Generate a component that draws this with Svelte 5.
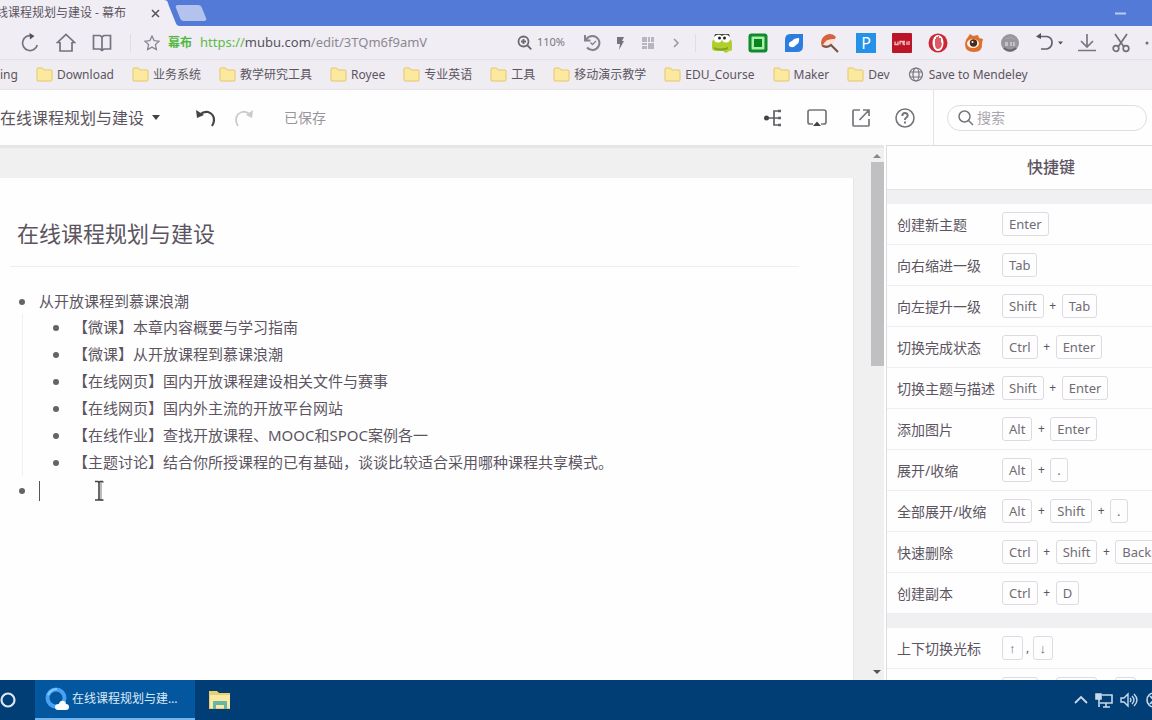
<script lang="ts">
  interface Shortcut {
    label: string
    keys: string[]
    sep?: string
  }

  const bookmarks = [
    'Download', '业务系统', '教学研究工具', 'Royee', '专业英语',
    '工具', '移动演示教学', 'EDU_Course', 'Maker', 'Dev'
  ]

  const topics = [
    '【微课】本章内容概要与学习指南',
    '【微课】从开放课程到慕课浪潮',
    '【在线网页】国内开放课程建设相关文件与赛事',
    '【在线网页】国内外主流的开放平台网站',
    '【在线作业】查找开放课程、MOOC和SPOC案例各一',
    '【主题讨论】结合你所授课程的已有基础，谈谈比较适合采用哪种课程共享模式。'
  ]

  const groups: Shortcut[][] = [
    [
      { label: '创建新主题', keys: ['Enter'] },
      { label: '向右缩进一级', keys: ['Tab'] },
      { label: '向左提升一级', keys: ['Shift', 'Tab'] },
      { label: '切换完成状态', keys: ['Ctrl', 'Enter'] },
      { label: '切换主题与描述', keys: ['Shift', 'Enter'] },
      { label: '添加图片', keys: ['Alt', 'Enter'] },
      { label: '展开/收缩', keys: ['Alt', '.'] },
      { label: '全部展开/收缩', keys: ['Alt', 'Shift', '.'] },
      { label: '快速删除', keys: ['Ctrl', 'Shift', 'Backspace'] },
      { label: '创建副本', keys: ['Ctrl', 'D'] }
    ],
    [
      { label: '上下切换光标', keys: ['↑', '↓'], sep: ',' },
      { label: '上下移动主题', keys: ['Ctrl', 'Shift', '↑'] }
    ]
  ]

  let keyword = $state('')
</script>

<div class="screen">
  <!-- 标签栏 -->
  <header class="tabs">
    <div class="tab">
      <span class="tab-title">在线课程规划与建设 - 幕布</span>
      <button class="tab-close" aria-label="关闭标签">
        <svg width="9" height="9" viewBox="0 0 9 9"><path d="M1 1l7 7M8 1L1 8" stroke="#555" stroke-width="1.5" /></svg>
      </button>
    </div>
    <svg class="tab-edge" width="16" height="26" viewBox="0 0 16 26"><path d="M0 0c4 0 4 3 5 6l6 15c1 3 2 5 5 5H0z" fill="#f1edf5" /></svg>
    <button class="new-tab" aria-label="新建标签">
      <svg width="32" height="18" viewBox="0 0 32 18"><path d="M3 1h20q3 0 4 3l4 10q1 3-2 3H9q-3 0-4-3L1 4q-1-3 2-3z" fill="#b3c3ee" /></svg>
    </button>
    <button class="minimize" aria-label="最小化">
      <svg width="11" height="3" viewBox="0 0 11 3"><path d="M0 1.5h11" stroke="#bccbf3" stroke-width="2" /></svg>
    </button>
  </header>

  <!-- 地址栏 -->
  <nav class="address" aria-label="地址栏">
    <div class="nav-buttons">
      <button aria-label="刷新">
        <svg width="20" height="20" viewBox="0 0 20 20" fill="none" stroke="#77737c" stroke-width="1.7"><path d="M12 2.8A7.5 7.5 0 1 0 17.3 12" /><path d="M9.500 0l5 3-4.500 3.500z" fill="#55515a" stroke="none" /></svg>
      </button>
      <button aria-label="主页">
        <svg width="20" height="20" viewBox="0 0 20 20" fill="none" stroke="#77737c" stroke-width="1.7"><path d="M4 9.500H1.500L10 1.500l8.500 8H16M4 9v9h12V9" /></svg>
      </button>
      <button aria-label="阅读">
        <svg width="20" height="20" viewBox="0 0 20 20" fill="none" stroke="#77737c" stroke-width="1.7"><path d="M1.500 2.500H8l2 1.500 2-1.500h6.500v13.500H12l-2 1.500L8 16H1.500zM10 4v13" /></svg>
      </button>
    </div>
    <span class="divider"></span>
    <button aria-label="收藏" class="star">
      <svg width="16" height="16" viewBox="0 0 16 16" fill="none" stroke="#8b8790" stroke-width="1.3"><path d="M8 1l2.100 4.600 5 .6-3.700 3.400 1 5L8 12.100 3.600 14.600l1-5L.9 6.200l5-.6z" /></svg>
    </button>
    <strong class="site">幕布</strong>
    <a class="url" href="#edit"><span class="scheme">https://</span><span class="host">mubu.com</span>/edit/3TQm6f9amV</a>
    <button class="zoom">
      <svg width="15" height="15" viewBox="0 0 15 15" fill="none" stroke="#6d6971" stroke-width="1.8"><circle cx="6.500" cy="6.500" r="5" /><path d="M10 10l4.300 4.300M4 6.500h5M6.500 4v5" /></svg>
      110%
    </button>
    <div class="page-tools">
      <button aria-label="恢复">
        <svg width="18" height="18" viewBox="0 0 18 18" fill="none" stroke="#85818a" stroke-width="2"><path d="M3 5.500q2.500-3.500 6.500-3.500a7 7 0 1 1-5.500 11.500M2 1v5.500h5.500" /><path d="M7.500 8.500l2 2L13 7" stroke-width="1.300" /></svg>
      </button>
      <button aria-label="加速">
        <svg width="18" height="18" viewBox="0 0 18 18"><path d="M6 3h7l-2 4h2l-5 9 1-6H6z" fill="#77737c" /></svg>
      </button>
      <button aria-label="二维码">
        <svg width="18" height="18" viewBox="0 0 18 18" fill="#b9b5be"><path d="M3 3h5v5H3zM9 3h2v5H9zM12 3h3v5h-3zM3 9h5v2H3zM3 12h5v3H3zM9 9h6v6H9z" /></svg>
      </button>
      <button aria-label="更多">
        <svg width="18" height="18" viewBox="0 0 18 18" fill="none" stroke="#99959e" stroke-width="1.500"><path d="M7 5l4 4-4 4" /></svg>
      </button>
    </div>
    <span class="divider"></span>
    <div class="extensions">
      <button aria-label="青蛙">
        <svg width="20" height="20" viewBox="0 0 20 20"><path d="M0 10q0-4 4-4h12q4 0 4 4v6q0 2-3 2l-3 2-3-2H4q-4 0-4-3z" fill="#b0cf2e" /><path d="M2 14q6 3 14 0v2q-7 3-14 0z" fill="#7fa51c" /><circle cx="6" cy="5.500" r="4" fill="#fff" /><circle cx="14" cy="5.500" r="4" fill="#fff" /><path d="M2 4q4-4 8-1 4-3 8 1l-1-3H3z" fill="#4a5140" /><circle cx="7.500" cy="5" r="1.500" fill="#222" /><circle cx="12.500" cy="5" r="1.500" fill="#222" /></svg>
      </button>
      <button aria-label="绿色方块">
        <svg width="20" height="20" viewBox="0 0 20 20"><rect x=".5" y=".5" width="19" height="19" rx="3" fill="#118a2d" /><rect x="3.500" y="3.500" width="13" height="13" rx="1" fill="#a6f0aa" /><rect x="6" y="6" width="8" height="8" fill="#07851e" /></svg>
      </button>
      <button aria-label="蓝色标签">
        <svg width="20" height="20" viewBox="0 0 20 20"><path d="M6 1h13v12q0 6-6 6H1V7q0-6 5-6z" fill="#2d7ce0" /><path d="M5 13q-1-4 3-5 2-3 7-3 1 5-3 7-3 4-7 1z" fill="#fff" /></svg>
      </button>
      <button aria-label="放大镜">
        <svg width="20" height="20" viewBox="0 0 20 20"><path d="M2 14Q-1 6 6 2q6-3 10 2l-3 5-7 5z" fill="#d9603a" /><path d="M3 12q3-7 12-6l-2 5-6 3z" fill="#f7e3d8" /><path d="M3 13q5 2 8-1l7 7" fill="none" stroke="#79544c" stroke-width="2.200" /></svg>
      </button>
      <button class="ext-p">P</button>
      <button class="ext-red" aria-label="红色工具">
        <svg width="20" height="20" viewBox="0 0 20 20"><rect width="20" height="20" rx="1" fill="#bd1528" /><path d="M3 8.500v3h3v-3M8 11.500v-3h3v3M13 8.500h-1v3h1M17 8v4M15 12v-3.500" fill="none" stroke="#f3bfc4" stroke-width="1.300" /></svg>
      </button>
      <button aria-label="广告拦截">
        <svg width="20" height="20" viewBox="0 0 20 20"><circle cx="10" cy="10" r="9.500" fill="#cc2734" /><ellipse cx="10" cy="10" rx="5.500" ry="8" fill="#fff" /><path d="M7 11V6h1V4h2v-1h1v2h2v5l1-1q0 7-4 7-3 0-3-5z" fill="#dd5a64" /></svg>
      </button>
      <button aria-label="微博">
        <svg width="20" height="20" viewBox="0 0 20 20"><path d="M4 4l2-3 3 2 5-1 1 3 4 1-1 4q1 9-8 9T1 11q0-4 3-7z" fill="#dd702d" /><ellipse cx="9" cy="10.500" rx="6" ry="4.500" fill="#fff3e4" /><circle cx="9.500" cy="10" r="3.700" fill="#4b2a20" /><circle cx="8.500" cy="9" r="1" fill="#fff" /></svg>
      </button>
      <button aria-label="灰色图标">
        <svg width="20" height="20" viewBox="0 0 20 20"><circle cx="10" cy="10" r="9" fill="#99979b" /><path d="M4 7q6-5 12 0l-2-1q-4-2-8 0z" fill="#d2d0d3" /><path d="M5 9h3v4H5zM10 9h2v4h-2zM13 9h2v4h-2z" fill="#c4c2c6" /><path d="M4 15q6 5 12 0" stroke="#6a686e" fill="none" stroke-width="2" /></svg>
      </button>
    </div>
    <div class="browser-tools">
      <button class="reopen" aria-label="撤销关闭">
        <svg width="27" height="20" viewBox="0 0 27 20" fill="none" stroke="#65616a" stroke-width="1.700"><path d="M2 3.500h9q5 1 5 6t-5 6.500H5" /><path d="M0 3.500L5 0v6zM22 8.500h5l-2.500 3z" fill="#55515a" stroke="none" /></svg>
      </button>
      <button aria-label="下载">
        <svg width="20" height="20" viewBox="0 0 20 20" fill="none" stroke="#7b7780" stroke-width="1.700"><path d="M10 1v13M4 8l6 6 6-6M1 17.500h18" /></svg>
      </button>
      <button aria-label="截图">
        <svg width="20" height="20" viewBox="0 0 20 20" fill="none" stroke="#737078" stroke-width="1.700"><path d="M4 1l9 13M16 1L7 14" /><circle cx="5" cy="15.500" r="2.800" /><circle cx="15" cy="15.500" r="2.800" /></svg>
      </button>
      <button aria-label="更多工具">
        <svg width="20" height="20" viewBox="0 0 20 20"><circle cx="2" cy="10" r="1.500" fill="#706c75" /></svg>
      </button>
    </div>
  </nav>

  <!-- 书签栏 -->
  <nav class="bookmarks" aria-label="书签">
    <a href="#ing">ing</a>
    {#each bookmarks as name}
      <a href="#{name}">
        <svg width="17" height="15" viewBox="0 0 17 15"><path d="M1 2q0-1 1-1h4.500l1.500 2h7q1 0 1 1v9q0 1-1 1H2q-1 0-1-1z" fill="#fce9a0" stroke="#e6c56c" /></svg>
        {name}
      </a>
    {/each}
    <a href="#mendeley">
      <svg width="17" height="15" viewBox="0 0 17 15" fill="none" stroke="#77737c" stroke-width="1.200"><circle cx="8" cy="7.500" r="6.500" /><ellipse cx="8" cy="7.500" rx="3" ry="6.500" /><path d="M2 5h12M2 10h12" /></svg>
      Save to Mendeley
    </a>
  </nav>

  <!-- 幕布顶栏 -->
  <header class="app-bar">
    <button class="doc-menu">
      在线课程规划与建设
      <svg width="8" height="5" viewBox="0 0 8 5"><path d="M0 0h8L4 5z" fill="#444" /></svg>
    </button>
    <div class="history">
      <button aria-label="撤销">
        <svg width="20" height="18" viewBox="0 0 20 18"><path d="M4 5.500q4-3.500 8-2.500 6 2 6 8 0 3-2 6" fill="none" stroke="#444" stroke-width="2.200" /><path d="M0 1l1 8 7-3z" fill="#444" /></svg>
      </button>
      <button aria-label="重做">
        <svg width="20" height="18" viewBox="0 0 20 18"><path d="M16 5.500q-4-3.500-8-2.500-6 2-6 8 0 3 2 6" fill="none" stroke="#ccc9ce" stroke-width="1.800" /><path d="M19 1l-1 8-6-3z" fill="#ccc9ce" /></svg>
      </button>
    </div>
    <span class="saved">已保存</span>
    <div class="doc-tools">
      <button aria-label="思维导图">
        <svg width="20" height="20" viewBox="0 0 20 20" fill="none" stroke="#626066" stroke-width="1.700"><path d="M18 3h-7v14h7M5 10h13" /><circle cx="3.500" cy="10" r="2.500" fill="#45434a" stroke="none" /><path d="M15 3h3M15 10h3M15 17h3" stroke-width="2.500" /></svg>
      </button>
      <button aria-label="演示">
        <svg width="20" height="20" viewBox="0 0 20 20" fill="none" stroke="#77757b" stroke-width="1.700"><path d="M6 16H3q-2 0-2-2V4q0-2 2-2h14q2 0 2 2v10q0 2-2 2h-3" /><path d="M10 13.500l4 4.500H6z" fill="#444248" stroke="none" /></svg>
      </button>
      <button aria-label="分享">
        <svg width="20" height="20" viewBox="0 0 20 20" fill="none" stroke="#77757b" stroke-width="1.700"><path d="M9 2H3q-1 0-1 1v14q0 1 1 1h14q1 0 1-1v-6M12 2h6v6M18 2l-9.500 10" /></svg>
      </button>
      <button aria-label="帮助">
        <svg width="20" height="20" viewBox="0 0 20 20" fill="none" stroke="#77757b" stroke-width="1.600"><circle cx="10" cy="10" r="9" /><path d="M7.300 8q0-3 2.700-3t2.700 2.500q0 1.500-1.700 2.300-1 .7-1 2.200M10 13.500v2" stroke-width="2" /></svg>
      </button>
    </div>
    <div class="search-wrap">
      <label class="search">
        <svg width="16" height="16" viewBox="0 0 16 16" fill="none" stroke="#77757b" stroke-width="1.500"><circle cx="6.500" cy="6.500" r="5.500" /><path d="M10.500 10.500L15 15" /></svg>
        <input type="text" placeholder="搜索" aria-label="搜索" bind:value={keyword} />
      </label>
    </div>
  </header>

  <main class="workspace">
    <section class="editor">
      <article class="paper">
        <h1>在线课程规划与建设</h1>
        <ul class="outline">
          <li>
            <span class="node">从开放课程到慕课浪潮</span>
            <ul class="children">
              {#each topics as topic}
                <li><span class="node">{topic}</span></li>
              {/each}
            </ul>
          </li>
          <li class="current">
            <span class="caret"></span>
            <svg class="pointer" width="10" height="22" viewBox="0 0 10 22" fill="none"><path d="M3 2h6M6 2v18M3 20h6" stroke="#bbb" stroke-width="2" /><path d="M0 1.500h3l1 1 1-1h3M4 2v17M0 20h3l1-1 1 1h3" stroke="#444" stroke-width="1.600" /></svg>
          </li>
        </ul>
      </article>
      <div class="scrollbar" aria-hidden="true">
        <svg width="8" height="5" viewBox="0 0 8 5"><path d="M0 5h8L4 1z" fill="#888" /></svg>
        <div class="thumb"></div>
        <svg width="8" height="5" viewBox="0 0 8 5"><path d="M0 0h8L4 4z" fill="#555" /></svg>
      </div>
    </section>

    <aside class="sidebar">
      <div class="panel">
        <h2>快捷键</h2>
        {#each groups as group}
          <dl>
            {#each group as item}
              <div class="shortcut">
                <dt>{item.label}</dt>
                <dd>
                  {#each item.keys as key, i}
                    {#if i > 0}<span class={item.sep ? 'comma' : 'plus'}>{item.sep ?? '+'}</span>{/if}
                    <kbd>{key}</kbd>
                  {/each}
                </dd>
              </div>
            {/each}
          </dl>
        {/each}
      </div>
    </aside>
  </main>

  <!-- 任务栏 -->
  <footer class="taskbar">
    <button class="cortana" aria-label="Cortana">
      <svg width="16" height="18" viewBox="0 0 16 18"><circle cx="8" cy="9" r="6.500" fill="none" stroke="#dce6f2" stroke-width="2.200" /></svg>
    </button>
    <button class="task">
      <svg width="24" height="24" viewBox="0 0 24 24"><circle cx="11" cy="11" r="8.500" fill="none" stroke="#46a2f5" stroke-width="4" /><path d="M3 8q3-6 9-6" fill="none" stroke="#85c8ff" stroke-width="2" /><path d="M13 23q-3 0-3-3t4-3q1-4 5-3 2 1 2 3 3 0 3 3t-3 3z" fill="#fff" /></svg>
      <span>在线课程规划与建设</span>
    </button>
    <button class="explorer" aria-label="文件资源管理器">
      <svg width="22" height="20" viewBox="0 0 22 20"><path d="M0 1h8l2 2h11v16H0z" fill="#e9cf72" /><path d="M1 5h20v13H1z" fill="#fae9a2" /><path d="M4 12q0-1 1-1h12q1 0 1 1v7h-3v-4H7v4H4z" fill="#68b5a7" /></svg>
    </button>
    <div class="tray">
      <svg width="14" height="18" viewBox="0 0 14 18" fill="none" stroke="#c9d9ea" stroke-width="1.800"><path d="M1 12l6-6 6 6" /></svg>
      <svg width="18" height="18" viewBox="0 0 18 18" fill="none" stroke="#c9d9ea" stroke-width="1.600"><path d="M7 4h10v8H5M8 16h7M11 12v4M4 8v8" /><path d="M1 3h5v5H1z" fill="#c9d9ea" /></svg>
      <svg width="18" height="18" viewBox="0 0 18 18" fill="none" stroke="#c9d9ea" stroke-width="1.400"><path d="M1 7h3l4-4v12l-4-4H1zM10 7q2 2 0 4M12 5q4 4 0 8M14 3q6 6 0 12" /></svg>
      <svg width="18" height="18" viewBox="0 0 18 18" fill="none" stroke="#c9d9ea" stroke-width="1.600"><circle cx="9" cy="9" r="7" /><path d="M5 5l8 8M13 5l-8 8" /></svg>
    </div>
  </footer>
</div>

<style>
  :global(body) {
    margin: 0;
  }

  .screen {
    display: flex;
    flex-direction: column;
    height: 100vh;
    overflow: hidden;
    background: #fefefe;
    color: #5c5561;
    font: 12px/1.5 'Noto Sans', 'Noto Sans CJK SC', sans-serif;
  }

  button {
    display: flex;
    align-items: center;
    justify-content: center;
    flex-shrink: 0;
    padding: 0;
    border: none;
    background: none;
    color: inherit;
    font: inherit;
    cursor: pointer;
  }

  a {
    color: inherit;
    text-decoration: none;
  }

  svg {
    display: block;
    flex-shrink: 0;
  }

  /* 标签栏 */
  .tabs {
    display: flex;
    align-items: center;
    flex-shrink: 0;
    height: 26px;
    background: #527ad6;
  }

  .tab {
    display: flex;
    align-items: center;
    justify-content: flex-end;
    gap: 25px;
    width: 164px;
    height: 26px;
    padding-right: 4px;
    box-sizing: border-box;
    overflow: hidden;
    background: #f1edf5;
    white-space: nowrap;
  }

  .tab-title {
    flex-shrink: 0;
  }

  .new-tab {
    margin-left: -5px;
  }

  .minimize {
    margin-left: auto;
    margin-right: 26px;
  }

  /* 地址栏 */
  .address {
    display: flex;
    align-items: center;
    flex-shrink: 0;
    height: 34px;
    padding-left: 20px;
    border-bottom: 1px solid #e4e1e8;
    box-sizing: border-box;
    background: #f0edf4;
    overflow: hidden;
  }

  .nav-buttons,
  .extensions {
    display: flex;
    gap: 16px;
  }

  .divider {
    flex-shrink: 0;
    width: 1px;
    height: 18px;
    background: #e0dde4;
  }

  .nav-buttons {
    margin-right: 18px;
  }

  .star {
    margin: 0 8px 0 13px;
  }

  .site {
    flex-shrink: 0;
    color: #52b83f;
  }

  .url {
    flex: 1;
    min-width: 0;
    margin-left: 8px;
    overflow: hidden;
    color: #8c8890;
    font-size: 13px;
    white-space: nowrap;
  }

  .scheme {
    color: #5bbb4a;
  }

  .host {
    color: #57535c;
  }

  .zoom {
    gap: 5px;
    margin-right: 18px;
    color: #7b7780;
    font-size: 11px;
  }

  .page-tools {
    display: flex;
    gap: 10px;
    margin-right: 10px;
  }

  .extensions {
    margin-left: 16px;
  }

  .ext-p {
    width: 20px;
    height: 20px;
    background: #2492e8;
    color: #fff;
    font-size: 16px;
    line-height: 20px;
  }

  .browser-tools {
    display: flex;
    gap: 14px;
    width: 116px;
    margin-left: 16px;
    overflow: hidden;
  }

  /* 书签栏 */
  .bookmarks {
    display: flex;
    align-items: center;
    gap: 18px;
    flex-shrink: 0;
    height: 30px;
    border-bottom: 1px solid #e5e2e8;
    box-sizing: border-box;
    overflow: hidden;
    background: #efecf2;
    white-space: nowrap;
  }

  .bookmarks a {
    display: flex;
    align-items: center;
    gap: 4px;
    flex-shrink: 0;
  }

  /* 幕布顶栏 */
  .app-bar {
    display: flex;
    align-items: center;
    flex-shrink: 0;
    height: 55px;
    background: #fefefe;
  }

  .doc-menu {
    gap: 8px;
    font-size: 16px;
  }

  .history {
    display: flex;
    gap: 18px;
    margin-left: 36px;
  }

  .saved {
    margin-left: 30px;
    color: #99959c;
    font-size: 14px;
  }

  .doc-tools {
    display: flex;
    gap: 24px;
    margin-left: auto;
    padding-right: 18px;
  }

  .search-wrap {
    display: flex;
    align-items: center;
    width: 219px;
    height: 100%;
    padding: 0 5px 0 13px;
    border-left: 1px solid #e4e2e6;
    box-sizing: border-box;
  }

  .search {
    display: flex;
    align-items: center;
    gap: 3px;
    flex: 1;
    min-width: 0;
    height: 26px;
    padding: 0 10px;
    border: 1px solid #dfdce2;
    border-radius: 13px;
    box-sizing: border-box;
  }

  .search input {
    flex: 1;
    min-width: 0;
    padding: 0;
    border: none;
    outline: none;
    background: none;
    color: #57505c;
    font: inherit;
    font-size: 14px;
  }

  .search input::placeholder {
    color: #aaa6ae;
  }

  .workspace {
    display: flex;
    flex: 1;
    min-height: 0;
  }

  /* 编辑区 */
  .editor {
    display: flex;
    flex: 1;
    min-width: 0;
    border-top: 3px solid #e6e5e7;
    background: #f0f0f1;
  }

  .paper {
    flex: 1;
    min-width: 0;
    margin-top: 30px;
    padding: 34px 54px 0 10px;
    border-right: 1px solid #e6e5e8;
    background: #fefefe;
  }

  h1 {
    margin: 0;
    padding: 0 7px 11px;
    border-bottom: 1px solid #eeedf0;
    font-size: 22px;
    font-weight: 400;
    line-height: 43px;
  }

  .outline,
  .children {
    margin: 0;
    padding: 0;
    list-style: none;
  }

  .outline {
    padding: 22px 0 0 9px;
    font-size: 15px;
    line-height: 25px;
  }

  .node,
  .current {
    display: flex;
    align-items: center;
    white-space: nowrap;
  }

  .node::before,
  .current::before {
    content: '';
    flex-shrink: 0;
    width: 6px;
    height: 6px;
    margin-right: 14px;
    border-radius: 50%;
    background: #65626a;
  }

  .children {
    margin-left: 3px;
    padding-left: 30px;
    border-left: 1px solid #efeef1;
    line-height: 27px;
  }

  .children .node::before {
    margin-right: 14px;
  }

  .current {
    height: 29px;
  }

  .caret {
    width: 1px;
    height: 20px;
    background: #555;
  }

  .pointer {
    margin-left: 55px;
  }

  .scrollbar {
    display: flex;
    flex-direction: column;
    align-items: center;
    width: 14px;
    margin-left: 16px;
    padding: 5px 0;
  }

  .thumb {
    width: 13px;
    height: 39%;
    margin: 4px 0 auto;
    background: #c0bfc1;
  }

  /* 快捷键面板 */
  .sidebar {
    width: 266px;
    flex-shrink: 0;
    margin-left: 2px;
    border-left: 1px solid #dddbe0;
    border-top: 1px solid #dddbe0;
    box-sizing: border-box;
    overflow: hidden;
    background: #f0eff2;
  }

  .panel {
    display: flex;
    flex-direction: column;
    gap: 14px;
    width: 328px;
  }

  h2 {
    margin: 0;
    border-bottom: 1px solid #e4e2e6;
    background: #fefefe;
    font-size: 16px;
    font-weight: 500;
    line-height: 43px;
    text-align: center;
  }

  dl {
    margin: 0;
    background: #fefefe;
  }

  .shortcut {
    display: flex;
    align-items: center;
    height: 41px;
    padding-left: 10px;
    border-bottom: 1px solid #efedf1;
    box-sizing: border-box;
    font-size: 14px;
    white-space: nowrap;
  }

  dt {
    width: 105px;
    flex-shrink: 0;
  }

  dd {
    display: flex;
    align-items: center;
    margin: 0;
  }

  kbd {
    padding: 0 6px;
    border: 1px solid #dfd9e4;
    border-radius: 3px;
    color: #716b76;
    font: 13px/22px 'Noto Sans', 'Liberation Sans', 'Noto Sans CJK SC', sans-serif;
  }

  .plus,
  .comma {
    width: 18px;
    font-size: 12px;
    text-align: center;
  }

  .comma {
    width: 10px;
  }

  /* 任务栏 */
  .taskbar {
    display: flex;
    align-items: stretch;
    flex-shrink: 0;
    height: 40px;
    background: #023e76;
    color: #dfe9f4;
  }

  .cortana {
    width: 35px;
    justify-content: flex-start;
  }

  .task {
    gap: 3px;
    width: 160px;
    padding: 0 16px 0 10px;
    border-bottom: 2px solid #76b4ec;
    background: #03579f;
  }

  .task span {
    flex: 1;
    overflow: hidden;
    text-align: left;
    text-overflow: ellipsis;
    white-space: nowrap;
  }

  .explorer {
    width: 49px;
  }

  .tray {
    display: flex;
    align-items: center;
    gap: 7px;
    width: 78px;
    margin-left: auto;
    overflow: hidden;
  }
</style>
